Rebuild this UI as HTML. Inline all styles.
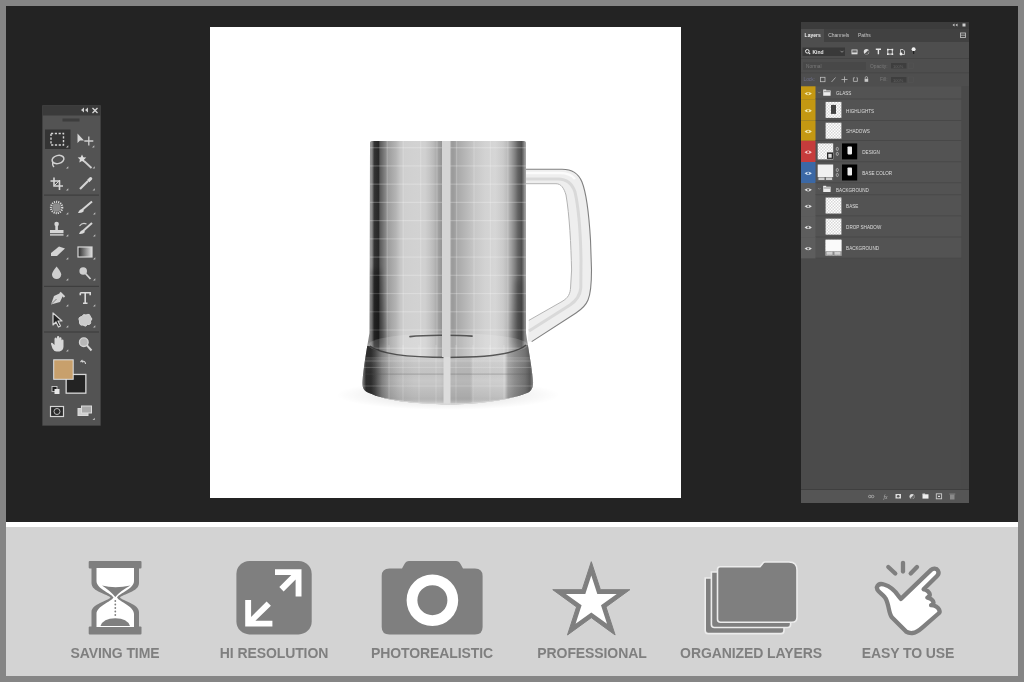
<!DOCTYPE html>
<html><head><meta charset="utf-8">
<style>
*{margin:0;padding:0;box-sizing:border-box}
html,body{width:1024px;height:682px;overflow:hidden;background:#858585;font-family:"Liberation Sans",sans-serif}
.a{position:absolute}
#dark{left:6px;top:6px;width:1012px;height:516px;background:#232323}
#white{left:6px;top:522px;width:1012px;height:5px;background:#fff}
#band{left:6px;top:527px;width:1012px;height:149px;background:#d3d3d3}
#canvas{left:210px;top:27px;width:471px;height:471px;background:#fff}
.lbl{will-change:transform;position:absolute;top:646px;font-size:14px;line-height:14px;font-weight:bold;color:#7f7f7f;letter-spacing:-0.1px;white-space:nowrap;transform:translateX(-50%)}
</style></head><body>
<div id="dark" class="a"></div>
<div id="white" class="a"></div>
<div id="band" class="a"></div>
<div id="canvas" class="a"></div>

<!--MUG-->
<svg class="a" style="left:210px;top:27px" width="471" height="471" viewBox="210 27 471 471">
<defs>
<linearGradient id="gb" x1="360" y1="0" x2="536" y2="0" gradientUnits="userSpaceOnUse">
<stop offset="0.0114" stop-color="#9a9a9a"/>
<stop offset="0.0568" stop-color="#9a9a9a"/>
<stop offset="0.0682" stop-color="#8a8a8a"/>
<stop offset="0.0756" stop-color="#555555"/>
<stop offset="0.0824" stop-color="#333333"/>
<stop offset="0.0909" stop-color="#2e2e2e"/>
<stop offset="0.1051" stop-color="#282828"/>
<stop offset="0.1136" stop-color="#5a5a5a"/>
<stop offset="0.1250" stop-color="#6a6a6a"/>
<stop offset="0.1364" stop-color="#7a7a7a"/>
<stop offset="0.1477" stop-color="#8a8a8a"/>
<stop offset="0.1591" stop-color="#9c9c9c"/>
<stop offset="0.1818" stop-color="#a8a8a8"/>
<stop offset="0.2045" stop-color="#b4b4b4"/>
<stop offset="0.2273" stop-color="#c6c6c6"/>
<stop offset="0.2557" stop-color="#d0d0d0"/>
<stop offset="0.3295" stop-color="#d2d2d2"/>
<stop offset="0.3693" stop-color="#d0d0d0"/>
<stop offset="0.3977" stop-color="#c4c4c4"/>
<stop offset="0.4205" stop-color="#b8b8b8"/>
<stop offset="0.4432" stop-color="#a2a2a2"/>
<stop offset="0.4631" stop-color="#959595"/>
<stop offset="0.5142" stop-color="#a0a0a0"/>
<stop offset="0.5284" stop-color="#9a9a9a"/>
<stop offset="0.5511" stop-color="#a8a8a8"/>
<stop offset="0.5966" stop-color="#b6b6b6"/>
<stop offset="0.6534" stop-color="#c8c8c8"/>
<stop offset="0.7102" stop-color="#d2d2d2"/>
<stop offset="0.7670" stop-color="#d6d6d6"/>
<stop offset="0.8125" stop-color="#cacaca"/>
<stop offset="0.8352" stop-color="#bcbcbc"/>
<stop offset="0.8580" stop-color="#a2a2a2"/>
<stop offset="0.8807" stop-color="#808080"/>
<stop offset="0.8977" stop-color="#626262"/>
<stop offset="0.9176" stop-color="#505050"/>
<stop offset="0.9261" stop-color="#6a6a6a"/>
<stop offset="0.9347" stop-color="#909090"/>
<stop offset="0.9432" stop-color="#9a9a9a"/>
<stop offset="0.9886" stop-color="#9a9a9a"/>
</linearGradient>
<radialGradient id="shd" cx="0.5" cy="0.5" r="0.5"><stop offset="0" stop-color="#000" stop-opacity="0.14"/><stop offset="0.6" stop-color="#000" stop-opacity="0.06"/><stop offset="1" stop-color="#000" stop-opacity="0"/></radialGradient>
<linearGradient id="hg" x1="0" y1="0" x2="1" y2="0"><stop offset="0" stop-color="#e8e8e8"/><stop offset="0.5" stop-color="#f4f4f4"/><stop offset="1" stop-color="#d8d8d8"/></linearGradient>
<linearGradient id="gbase" x1="360" y1="0" x2="536" y2="0" gradientUnits="userSpaceOnUse">
<stop offset="0.0000" stop-color="#aaaaaa"/>
<stop offset="0.0097" stop-color="#9a9a9a"/>
<stop offset="0.0227" stop-color="#606060"/>
<stop offset="0.0341" stop-color="#2e2e2e"/>
<stop offset="0.0625" stop-color="#2c2c2c"/>
<stop offset="0.0852" stop-color="#464646"/>
<stop offset="0.1250" stop-color="#808080"/>
<stop offset="0.1705" stop-color="#a8a8a8"/>
<stop offset="0.2273" stop-color="#bdbdbd"/>
<stop offset="0.3125" stop-color="#c8c8c8"/>
<stop offset="0.4545" stop-color="#c8c8c8"/>
<stop offset="0.4773" stop-color="#c0c0c0"/>
<stop offset="0.5114" stop-color="#b8b8b8"/>
<stop offset="0.6250" stop-color="#b8b8b8"/>
<stop offset="0.6477" stop-color="#cccccc"/>
<stop offset="0.8239" stop-color="#d0d0d0"/>
<stop offset="0.8409" stop-color="#a4a4a4"/>
<stop offset="0.8807" stop-color="#8c8c8c"/>
<stop offset="0.9375" stop-color="#727272"/>
<stop offset="0.9659" stop-color="#585858"/>
<stop offset="0.9830" stop-color="#888888"/>
<stop offset="0.9915" stop-color="#a0a0a0"/>
<stop offset="1.0000" stop-color="#aaaaaa"/>
</linearGradient>
<linearGradient id="dk" x1="0" y1="280" x2="0" y2="346" gradientUnits="userSpaceOnUse"><stop offset="0" stop-color="#000" stop-opacity="0"/><stop offset="1" stop-color="#000" stop-opacity="0.35"/></linearGradient>
<linearGradient id="bv" x1="0" y1="357" x2="0" y2="404" gradientUnits="userSpaceOnUse"><stop offset="0" stop-color="#fff" stop-opacity="0.12"/><stop offset="0.5" stop-color="#000" stop-opacity="0"/><stop offset="0.85" stop-color="#000" stop-opacity="0.08"/><stop offset="1" stop-color="#fff" stop-opacity="0.3"/></linearGradient>
<filter id="bl3" x="-100%" y="-50%" width="300%" height="200%"><feGaussianBlur stdDeviation="3"/></filter>
<clipPath id="bodyclip"><path d="M370 142.5 Q370 140.9 371.8 140.9 L524.2 140.9 Q525.9 140.9 525.9 142.5 L526 333 C528.5 350 532 368 533 381 C533.5 388 531 391.5 527 393 C510 400 480 404.2 448 404.2 C414 404.2 386 400.5 369 393 C364 391 362 388 362.5 381 C363.5 368 366.5 350 369.5 333 Z"/></clipPath>
</defs>
<ellipse cx="448" cy="395" rx="112" ry="15" fill="url(#shd)"/>
<path d="M526 169.2 L562 169.2 C570 169.2 578 172 582 182 C586 192 589 215 590.5 240 L591.5 270 C591.5 285 591 293 588 300 C586 305 582 309 576 313 L531.7 341.6 L528 341.6 L528.8 320.4 L562 301.5 C568 298 570.4 294 570.6 287 L571.6 270 C571 245 569.5 215 566 195 C564 188 561 183.7 556 183.7 L526 183.7 Z" fill="#eeeeee"/>
<path d="M526 173 L560 173 C567 173 572 175 575 179" fill="none" stroke="#fbfbfb" stroke-width="2.5"/>
<path d="M526 179 L558 179 C566 179 572 183 575 192 C578 205 580.5 230 581 260 L580.8 288 C580 296 576 301 570 305 L529 331" fill="none" stroke="#d9d9d9" stroke-width="3"/>
<path d="M526 169.2 L562 169.2 C570 169.2 578 172 582 182 C586 192 589 215 590.5 240 L591.5 270 C591.5 285 591 293 588 300 C586 305 582 309 576 313 L531.7 341.6" fill="none" stroke="#808080" stroke-width="1.1"/>
<path d="M528.8 320.4 L562 301.5 C568 298 570.4 294 570.6 287 L571.6 270 C571 245 569.5 215 566 195 C564 188 561 183.7 556 183.7 L526 183.7" fill="none" stroke="#b4b4b4" stroke-width="1"/>
<g clip-path="url(#bodyclip)">
<rect x="355" y="135" width="185" height="275" fill="url(#gb)"/>
<rect x="386.59999999999997" y="141" width="1.2" height="265" fill="#fff" fill-opacity="0.2"/><rect x="402.59999999999997" y="141" width="1.2" height="265" fill="#fff" fill-opacity="0.2"/><rect x="420.09999999999997" y="141" width="1.2" height="265" fill="#fff" fill-opacity="0.2"/><rect x="436.4" y="141" width="1.2" height="265" fill="#fff" fill-opacity="0.2"/><rect x="456.0" y="141" width="1.2" height="265" fill="#fff" fill-opacity="0.2"/><rect x="473.4" y="141" width="1.2" height="265" fill="#fff" fill-opacity="0.2"/><rect x="489.79999999999995" y="141" width="1.2" height="265" fill="#fff" fill-opacity="0.2"/><rect x="507.29999999999995" y="141" width="1.2" height="265" fill="#fff" fill-opacity="0.2"/><rect x="360" y="147.1" width="176" height="1.2" fill="#fff" fill-opacity="0.24"/><rect x="360" y="165.32999999999998" width="176" height="1.2" fill="#fff" fill-opacity="0.24"/><rect x="360" y="183.56" width="176" height="1.2" fill="#fff" fill-opacity="0.24"/><rect x="360" y="201.79" width="176" height="1.2" fill="#fff" fill-opacity="0.24"/><rect x="360" y="220.02" width="176" height="1.2" fill="#fff" fill-opacity="0.24"/><rect x="360" y="238.25" width="176" height="1.2" fill="#fff" fill-opacity="0.24"/><rect x="360" y="256.47999999999996" width="176" height="1.2" fill="#fff" fill-opacity="0.24"/><rect x="360" y="274.71" width="176" height="1.2" fill="#fff" fill-opacity="0.24"/><rect x="360" y="292.93999999999994" width="176" height="1.2" fill="#fff" fill-opacity="0.24"/><rect x="360" y="311.16999999999996" width="176" height="1.2" fill="#fff" fill-opacity="0.24"/><rect x="360" y="329.4" width="176" height="1.2" fill="#fff" fill-opacity="0.24"/><rect x="360" y="347.63" width="176" height="1.2" fill="#fff" fill-opacity="0.24"/><rect x="360" y="365.85999999999996" width="176" height="1.2" fill="#fff" fill-opacity="0.24"/><rect x="360" y="384.09" width="176" height="1.2" fill="#fff" fill-opacity="0.24"/>
<path d="M355 346 L370 346 C380 354 410 357.4 448 357.4 C486 357.4 516 354 526 345 L540 345 L540 410 L355 410Z" fill="url(#gbase)"/>
<rect x="360" y="357" width="176" height="50" fill="url(#bv)"/>
<rect x="360" y="360.5" width="176" height="1" fill="#fff" fill-opacity="0.2"/><rect x="360" y="366.9" width="176" height="1" fill="#fff" fill-opacity="0.2"/><rect x="360" y="385.5" width="176" height="1" fill="#fff" fill-opacity="0.2"/><rect x="388.5" y="345" width="1" height="65" fill="#fff" fill-opacity="0.2"/><rect x="402.5" y="345" width="1" height="65" fill="#fff" fill-opacity="0.2"/><rect x="418.5" y="345" width="1" height="65" fill="#fff" fill-opacity="0.2"/><rect x="435.5" y="345" width="1" height="65" fill="#fff" fill-opacity="0.2"/><rect x="455.5" y="345" width="1" height="65" fill="#fff" fill-opacity="0.2"/><rect x="472.5" y="345" width="1" height="65" fill="#fff" fill-opacity="0.2"/><rect x="489.5" y="345" width="1" height="65" fill="#fff" fill-opacity="0.2"/><rect x="503.5" y="345" width="1" height="65" fill="#fff" fill-opacity="0.2"/>
<path d="M372 270 L380 270 L385 346 L370 346Z" fill="#000" fill-opacity="0.35" filter="url(#bl3)"/>
<path d="M515 280 L522 280 L526 345 L510 345Z" fill="#000" fill-opacity="0.2" filter="url(#bl3)"/>
<ellipse cx="448" cy="345" rx="80" ry="12" fill="#fff" fill-opacity="0.16"/>
<path d="M370 346 C380 354 410 357.4 448 357.4 C486 357.4 516 354 526 345" fill="none" stroke="#2e2e2e" stroke-opacity="0.75" stroke-width="1.5"/>
<path d="M410 336.6 C424 335 456 334.8 472 336.2" fill="none" stroke="#3a3a3a" stroke-opacity="0.8" stroke-width="1.7" stroke-linecap="round"/>
<path d="M362 374.2 C390 374 506 374 534 374.2" fill="none" stroke="#555" stroke-opacity="0.25" stroke-width="1.2"/>
<rect x="442" y="135" width="8.5" height="222" fill="#d4d4d4"/><rect x="443.5" y="357" width="7" height="50" fill="#dcdcdc"/>
<path d="M362 393 C386 401 414 404.2 448 404.2 C480 404.2 510 400 534 393" fill="none" stroke="#d8d8d8" stroke-width="1.5"/>
</g>
</svg>
<!--/MUG-->

<!-- TOOLBAR -->
<svg class="a" style="left:42px;top:105px" width="59" height="321" viewBox="42 105 59 321">
<rect x="42" y="105" width="59" height="321" fill="#2e2e2e"/>
<rect x="42.5" y="105.5" width="58" height="320" fill="#535353"/>
<rect x="42.5" y="105.5" width="58" height="10" fill="#3a3a3a"/>
<rect x="62.5" y="118.5" width="17" height="3" fill="#3d3d3d"/>
<!-- collapse & close -->
<path d="M81 110 l3 -2.5 v5 z M85 110 l3 -2.5 v5 z" fill="#cfcfcf"/>
<path d="M92.5 108 l5 5 M97.5 108 l-5 5" stroke="#d8d8d8" stroke-width="1.3"/>
<g stroke="#d2d2d2" fill="none" stroke-width="1.3">
<!-- separators -->
</g>
<rect x="44" y="194.5" width="55" height="1.2" fill="#3e3e3e"/>
<rect x="44" y="285.8" width="55" height="1.2" fill="#3e3e3e"/>
<rect x="44" y="331.4" width="55" height="1.2" fill="#3e3e3e"/>
<!-- selected marquee bg -->
<rect x="45" y="129.5" width="25.5" height="19.5" fill="#343434"/>
<rect x="51" y="133.5" width="12.5" height="11.5" fill="none" stroke="#d4d4d4" stroke-width="1.4" stroke-dasharray="2.2 1.6"/>
<!-- move -->
<path d="M77.5 133.5 L77.5 143 L80 140.5 L84 140.5 Z" fill="#d6d6d6"/>
<path d="M88.8 136.5 v9 M84.3 141 h9" stroke="#d0d0d0" stroke-width="1.3"/>
<!-- lasso -->
<ellipse cx="58" cy="159.5" rx="6" ry="4" fill="none" stroke="#d2d2d2" stroke-width="1.5" transform="rotate(-15 58 159.5)"/>
<path d="M53 162 q-1 3 1 5" fill="none" stroke="#d2d2d2" stroke-width="1.4"/>
<!-- wand -->
<path d="M82 154.5 l1.3 2.7 3 .3 -2.2 2 .6 3 -2.7 -1.5 -2.7 1.5 .6 -3 -2.2 -2 3 -.3z" fill="#dcdcdc"/>
<path d="M84 161 L91.5 168" stroke="#d0d0d0" stroke-width="1.8"/>
<!-- crop -->
<path d="M54 177.5 V186 H63 M50.5 181 H59.5 V190" fill="none" stroke="#d6d6d6" stroke-width="1.6"/>
<path d="M54 186 L60 180" stroke="#d6d6d6" stroke-width="1"/>
<!-- eyedropper -->
<path d="M80 189 L88 181" stroke="#d4d4d4" stroke-width="2.2"/>
<path d="M87 180 l2.5 -2.5 a1.6 1.6 0 0 1 2.3 2.3 l-2.5 2.5z" fill="#d8d8d8"/>
<!-- spot heal -->
<circle cx="56.6" cy="207.5" r="5.6" fill="none" stroke="#dcdcdc" stroke-width="2.2" stroke-dasharray="1.1 1"/><circle cx="56.6" cy="207.5" r="4.2" fill="#8c8c8c"/>
<!-- brush -->
<path d="M92 201.5 L82 210" stroke="#d6d6d6" stroke-width="2"/>
<path d="M82.5 209 q-3 0 -4.5 4 q4 .5 6 -2z" fill="#dadada"/>
<!-- stamp -->
<circle cx="56.6" cy="224" r="2.3" fill="#d6d6d6"/>
<rect x="55.3" y="225" width="2.6" height="5" fill="#d6d6d6"/>
<rect x="50" y="230" width="13.5" height="3.2" fill="#d6d6d6"/>
<rect x="50" y="234.2" width="13.5" height="1.4" fill="#d6d6d6"/>
<!-- history brush -->
<path d="M92 223 L83 231" stroke="#d6d6d6" stroke-width="2"/>
<path d="M83.5 230 q-3 0 -4.5 4 q4 .5 6 -2z" fill="#dadada"/>
<path d="M79.5 226 q3 -4 7 -2" fill="none" stroke="#cfcfcf" stroke-width="1.2"/>
<!-- eraser -->
<path d="M51 253 L59 246.5 L65 248.5 L57 256 L51 256z" fill="#d4d4d4"/>
<!-- gradient -->
<defs><linearGradient id="tg" x1="0" x2="1"><stop offset="0" stop-color="#2a2a2a"/><stop offset="1" stop-color="#e0e0e0"/></linearGradient></defs>
<rect x="78" y="247" width="14" height="10" fill="url(#tg)" stroke="#d8d8d8" stroke-width="1.2"/>
<!-- drop -->
<path d="M56.6 266.5 Q52 272 52 274.5 a4.6 4.6 0 0 0 9.2 0 Q61.2 272 56.6 266.5z" fill="#cfcfcf"/>
<!-- dodge -->
<circle cx="83.2" cy="271" r="3.8" fill="#cfcfcf"/>
<path d="M85.5 273.5 L90.5 279" stroke="#d0d0d0" stroke-width="1.8"/>
<!-- pen -->
<path d="M51 304.5 L54 296 L60.5 293 L63 295.5 L60 302 Z" fill="#d4d4d4"/>
<path d="M60 292.5 L64.5 297" stroke="#d4d4d4" stroke-width="2"/>
<path d="M51.5 304 L56.5 299" stroke="#6a6a6a" stroke-width=".8"/>
<!-- T -->
<path d="M80.3 292.7 H90.2 V295.2 M80.3 292.7 V295.2 M85.2 292.7 V303 M83 303.2 H87.5" fill="none" stroke="#dadada" stroke-width="1.6"/>
<!-- path select -->
<path d="M53 313 L53 325 L56 322 L58.5 327 L60.5 326 L58 321 L62 321 Z" fill="#222" stroke="#d6d6d6" stroke-width="1.2" stroke-linejoin="round"/>
<!-- custom shape -->
<path d="M79.5 321 q-2 -4 2.5 -4.5 q1 -3 4 -1.5 q4 -2 4.5 2 q3 2 0 4 q1 4 -3 3.5 q-2 3 -4.5 0.5 q-4 1 -3.5 -4z" fill="#cacaca" stroke="#d6d6d6" stroke-width="1"/>
<!-- hand -->
<path d="M51 344 q0 -2 1.5 -1 l2 2 v-6 q0 -1.5 1.2 -1.5 q1.2 0 1.2 1.5 v-1.5 q0 -1.4 1.2 -1.4 q1.2 0 1.2 1.4 v1 q0 -1.2 1.1 -1.2 q1.1 0 1.1 1.2 v2 q0 -1 1 -1 q1 0 1 1 v6 q0 4 -4 5 h-3 q-2.5 0 -4 -3z" fill="#d8d8d8"/>
<!-- zoom -->
<circle cx="83.8" cy="342.2" r="4.3" fill="#b8b8b8" stroke="#d6d6d6" stroke-width="1.4"/>
<path d="M86.8 345.2 L91.5 350.5" stroke="#d6d6d6" stroke-width="2"/>
<!-- swatches -->
<path d="M82 361 a3 3 0 0 1 3.5 3 M80.5 362 l1.5 -1.5 1 2" fill="none" stroke="#d6d6d6" stroke-width="1.1"/>
<rect x="65.5" y="373.8" width="21" height="20" fill="#d8d8d8"/>
<rect x="66.8" y="375.1" width="18.4" height="17.4" fill="#232323"/>
<rect x="53.2" y="359.3" width="20.5" height="20.5" fill="#e4e4e4"/>
<rect x="54.2" y="360.3" width="18.5" height="18.5" fill="#c8a06c"/>
<rect x="52" y="386.5" width="5" height="5" fill="#1e1e1e" stroke="#d8d8d8" stroke-width=".8"/>
<rect x="54.5" y="389" width="5" height="5" fill="#e8e8e8"/>
<!-- quick mask -->
<rect x="50.5" y="406.5" width="13" height="10" fill="#2a2a2a" stroke="#d6d6d6" stroke-width="1.2"/>
<circle cx="57" cy="411.5" r="3" fill="none" stroke="#bbb" stroke-width="1"/>
<!-- screen mode -->
<rect x="78" y="408.5" width="10" height="7" fill="#cfcfcf" stroke="#dcdcdc" stroke-width="1"/>
<rect x="81.5" y="406" width="10" height="7" fill="#aaa" stroke="#dcdcdc" stroke-width="1"/>
<!-- tiny triangles -->
<g fill="#bdbdbd">
<path d="M66 147.5 h2.3 v-2.3z M92 147.5 h2.3 v-2.3z M66 168.5 h2.3 v-2.3z M92.5 168.5 h2.3 v-2.3z M66 190.5 h2.3 v-2.3z M92.5 190.5 h2.3 v-2.3z"/>
<path d="M66 214.5 h2.3 v-2.3z M93 214.5 h2.3 v-2.3z M66 236.5 h2.3 v-2.3z M93 236.5 h2.3 v-2.3z M66 259.5 h2.3 v-2.3z M93 259.5 h2.3 v-2.3z M66 280.5 h2.3 v-2.3z M93 280.5 h2.3 v-2.3z"/>
<path d="M66 306.5 h2.3 v-2.3z M93 306.5 h2.3 v-2.3z M66 327.5 h2.3 v-2.3z M93 327.5 h2.3 v-2.3z M66 351.5 h2.3 v-2.3z M92.5 420 h2.3 v-2.3z"/>
</g>
</svg>

<!-- LAYERS -->
<svg class="a" style="left:801px;top:22px;will-change:transform" width="168" height="481" viewBox="801 22 168 481">
<defs><pattern id="chk" x="0" y="0" width="3" height="3" patternUnits="userSpaceOnUse"><rect width="3" height="3" fill="#fff"/><rect width="1.5" height="1.5" fill="#d8d8d8"/><rect x="1.5" y="1.5" width="1.5" height="1.5" fill="#d8d8d8"/></pattern></defs>
<rect x="801" y="22" width="168" height="481" fill="#4b4b4b"/>
<rect x="801" y="22" width="168" height="7" fill="#3c3c3c"/>
<rect x="801" y="29" width="168" height="13" fill="#414141"/>
<rect x="801" y="29" width="23" height="13" fill="#4e4e4e"/>
<rect x="801" y="42" width="168" height="44.3" fill="#4e4e4e"/>
<path d="M952.5 25 l2 -1.6 v3.2z M955.5 25 l2 -1.6 v3.2z" fill="#ccc"/><rect x="962.5" y="23.5" width="3" height="3" fill="#ccc"/>
<rect x="960.5" y="33" width="5" height="4.5" fill="none" stroke="#bbb" stroke-width="0.9"/><path d="M960.5 35.2h5" stroke="#bbb" stroke-width=".8"/>
<text x="804.6" y="37.2" font-size="5" fill="#f0f0f0" font-weight="bold" font-family="Liberation Sans">Layers</text>
<text x="828.2" y="37.2" font-size="5" fill="#c8c8c8" font-weight="normal" font-family="Liberation Sans">Channels</text>
<text x="858" y="37.2" font-size="5" fill="#c8c8c8" font-weight="normal" font-family="Liberation Sans">Paths</text>
<rect x="802.5" y="47.5" width="42.5" height="8.5" fill="#393939"/>
<circle cx="807.3" cy="51.3" r="1.8" fill="none" stroke="#eee" stroke-width="1"/><path d="M808.6 52.6 l1.6 1.6" stroke="#eee" stroke-width="1.1"/>
<text x="812.5" y="53.8" font-size="5" fill="#e8e8e8" font-weight="bold" font-family="Liberation Sans">Kind</text>
<path d="M840.5 50.8 l1.5 1.5 1.5 -1.5" fill="none" stroke="#aaa" stroke-width=".7"/>
<rect x="851.5" y="49.5" width="6" height="4.8" fill="#ddd"/><rect x="852.3" y="50.3" width="4.4" height="2.2" fill="#666"/>
<circle cx="866.5" cy="51.8" r="2.7" fill="#e0e0e0"/><path d="M864.6 53.7 a2.7 2.7 0 0 0 3.8 -3.8z" fill="#555"/>
<path d="M875.8 49.3 h5.2 M878.4 49.3 v5" stroke="#e6e6e6" stroke-width="1.4"/>
<rect x="887.8" y="49.6" width="4.5" height="4.5" fill="none" stroke="#ddd" stroke-width=".9"/><rect x="887" y="48.8" width="1.6" height="1.6" fill="#eee"/><rect x="891.6" y="48.8" width="1.6" height="1.6" fill="#eee"/><rect x="887" y="53.4" width="1.6" height="1.6" fill="#eee"/><rect x="891.6" y="53.4" width="1.6" height="1.6" fill="#eee"/>
<path d="M900.5 54.5 v-5 h2.5 l1.5 1.5 v3.5z" fill="none" stroke="#ddd" stroke-width=".8"/><circle cx="901" cy="54" r="1.4" fill="#eee"/>
<circle cx="913.6" cy="49.3" r="2" fill="#f0f0f0"/><rect x="913" y="51" width="1.2" height="3" fill="#222"/>
<rect x="801" y="58" width="168" height=".8" fill="#444"/>
<rect x="803" y="62" width="63" height="8" fill="#484848"/>
<text x="806" y="68.0" font-size="4.8" fill="#7a7a7a" font-weight="normal" font-family="Liberation Sans">Normal</text>
<text x="870" y="68.0" font-size="4.8" fill="#7a7a7a" font-weight="normal" font-family="Liberation Sans">Opacity:</text>
<rect x="891" y="63" width="15.5" height="5.5" fill="#3e3e3e"/>
<text x="893" y="67.5" font-size="4" fill="#666" font-weight="normal" font-family="Liberation Sans">100%</text>
<rect x="908.5" y="63" width="5" height="5.5" fill="none" stroke="#555" stroke-width=".5"/>
<rect x="801" y="72.4" width="168" height=".8" fill="#444"/>
<text x="803.5" y="81.3" font-size="4.8" fill="#6d6f8a" font-weight="normal" font-family="Liberation Sans">Lock:</text>
<g stroke="#bdbdbd" fill="none" stroke-width=".8"><rect x="820.6" y="77.3" width="4.4" height="4.4"/><path d="M831.5 82 l4 -4.5"/><path d="M844.5 76.5v6 M841.5 79.5h6"/><path d="M853.4 77.8 v3.6 h4 M853.4 77.8h1.5 M857.4 81.4v-3.6h-1"/></g><rect x="864.6" y="78.8" width="3.6" height="3" fill="#c8c8c8"/><path d="M865.2 78.8 v-1 a1.2 1.2 0 0 1 2.4 0 v1" fill="none" stroke="#c8c8c8" stroke-width=".7"/>
<text x="880" y="81.3" font-size="4.8" fill="#7a7a7a" font-weight="normal" font-family="Liberation Sans">Fill:</text>
<rect x="891" y="77" width="15.5" height="5.5" fill="#3e3e3e"/>
<text x="893" y="81.5" font-size="4" fill="#666" font-weight="normal" font-family="Liberation Sans">100%</text>
<rect x="908.5" y="77" width="5" height="5.5" fill="none" stroke="#555" stroke-width=".5"/>
<rect x="801" y="86.3" width="160.5" height="172" fill="#535353"/>
<rect x="961.5" y="86.3" width="7.5" height="403" fill="#4a4a4a"/>
<rect x="801" y="86.3" width="14.5" height="12.900000000000006" fill="#c49812"/>
<rect x="815.5" y="98.60000000000001" width="146" height=".8" fill="#474747"/>
<path d="M804.5 93.55 q3.7 -3.3 7.4 0 q-3.7 3.3 -7.4 0z" fill="#f2e9b0"/><circle cx="808.2" cy="93.55" r="1.1" fill="#c49812"/>
<path d="M818 91.75 l1.3 1.3 1.3 -1.3" fill="none" stroke="#999" stroke-width=".6"/>
<rect x="823.2" y="90.45" width="7.4" height="5.3" fill="#ececec"/><rect x="823.2" y="89.55" width="3" height="1.2" fill="#ececec"/><rect x="823.8" y="91.35" width="6.2" height=".8" fill="#777"/>
<text x="836" y="95.45" font-size="4.6" fill="#dedede" font-weight="normal" font-family="Liberation Sans">GLASS</text>
<rect x="801" y="99.2" width="14.5" height="21.39999999999999" fill="#c49812"/>
<rect x="815.5" y="120.0" width="146" height=".8" fill="#474747"/>
<path d="M804.5 110.7 q3.7 -3.3 7.4 0 q-3.7 3.3 -7.4 0z" fill="#f2e9b0"/><circle cx="808.2" cy="110.7" r="1.1" fill="#c49812"/>
<rect x="825.6" y="101.9" width="15.8" height="16" fill="url(#chk)"/>
<rect x="831" y="104.9" width="5" height="9" fill="#444"/>
<text x="846.1" y="112.60000000000001" font-size="4.6" fill="#dedede" font-weight="normal" font-family="Liberation Sans">HIGHLIGHTS</text>
<rect x="801" y="120.6" width="14.5" height="20.200000000000017" fill="#c49812"/>
<rect x="815.5" y="140.20000000000002" width="146" height=".8" fill="#474747"/>
<path d="M804.5 131.5 q3.7 -3.3 7.4 0 q-3.7 3.3 -7.4 0z" fill="#f2e9b0"/><circle cx="808.2" cy="131.5" r="1.1" fill="#c49812"/>
<rect x="825.6" y="122.69999999999999" width="15.8" height="16" fill="url(#chk)"/>
<text x="846.1" y="133.39999999999998" font-size="4.6" fill="#dedede" font-weight="normal" font-family="Liberation Sans">SHADOWS</text>
<rect x="801" y="140.8" width="14.5" height="21.19999999999999" fill="#c63c3c"/>
<rect x="815.5" y="161.4" width="146" height=".8" fill="#474747"/>
<path d="M804.5 152.20000000000002 q3.7 -3.3 7.4 0 q-3.7 3.3 -7.4 0z" fill="#f3c7c7"/><circle cx="808.2" cy="152.20000000000002" r="1.1" fill="#c63c3c"/>
<rect x="817.7" y="143.4" width="15.5" height="16" fill="url(#chk)"/><rect x="827" y="152.4" width="6" height="6.5" fill="#2a2a2a"/><rect x="828.3" y="153.9" width="3.4" height="3.8" fill="#ddd"/>
<rect x="836.3" y="147.4" width="2" height="3" rx="1" fill="none" stroke="#ccc" stroke-width=".7"/><rect x="836.3" y="152.4" width="2" height="3" rx="1" fill="none" stroke="#ccc" stroke-width=".7"/>
<rect x="842" y="143.4" width="15.2" height="16" fill="#000"/><rect x="847.5" y="146.4" width="4.5" height="8" rx=".8" fill="#eee"/>
<text x="862.3" y="154.1" font-size="4.6" fill="#dedede" font-weight="normal" font-family="Liberation Sans">DESIGN</text>
<rect x="801" y="162" width="14.5" height="21" fill="#3b68a5"/>
<rect x="815.5" y="182.4" width="146" height=".8" fill="#474747"/>
<path d="M804.5 173.3 q3.7 -3.3 7.4 0 q-3.7 3.3 -7.4 0z" fill="#d7e6f6"/><circle cx="808.2" cy="173.3" r="1.1" fill="#3b68a5"/>
<rect x="817.7" y="164.5" width="15.5" height="12.5" fill="#f0f0f0"/><rect x="817.7" y="177.0" width="15.5" height="3.5" fill="#6a6a6a"/><rect x="818.5" y="177.5" width="6" height="2.5" fill="#d0d0d0"/><rect x="826" y="177.5" width="6" height="2.5" fill="#d0d0d0"/>
<rect x="836.3" y="168.5" width="2" height="3" rx="1" fill="none" stroke="#ccc" stroke-width=".7"/><rect x="836.3" y="173.5" width="2" height="3" rx="1" fill="none" stroke="#ccc" stroke-width=".7"/>
<rect x="842" y="164.5" width="15.2" height="16" fill="#000"/><rect x="847.5" y="167.5" width="4.5" height="8" rx=".8" fill="#eee"/>
<text x="862.3" y="175.2" font-size="4.6" fill="#dedede" font-weight="normal" font-family="Liberation Sans">BASE COLOR</text>
<rect x="801" y="183" width="14.5" height="12" fill="#5d5d5d"/>
<rect x="815.5" y="194.4" width="146" height=".8" fill="#474747"/>
<path d="M804.5 189.8 q3.7 -3.3 7.4 0 q-3.7 3.3 -7.4 0z" fill="#e2e2e2"/><circle cx="808.2" cy="189.8" r="1.1" fill="#5d5d5d"/>
<path d="M818 188.0 l1.3 1.3 1.3 -1.3" fill="none" stroke="#999" stroke-width=".6"/>
<rect x="823.2" y="186.7" width="7.4" height="5.3" fill="#ececec"/><rect x="823.2" y="185.8" width="3" height="1.2" fill="#ececec"/><rect x="823.8" y="187.6" width="6.2" height=".8" fill="#777"/>
<text x="836" y="191.7" font-size="4.6" fill="#dedede" font-weight="normal" font-family="Liberation Sans">BACKGROUND</text>
<rect x="801" y="195" width="14.5" height="21.099999999999994" fill="#5d5d5d"/>
<rect x="815.5" y="215.5" width="146" height=".8" fill="#474747"/>
<path d="M804.5 206.35000000000002 q3.7 -3.3 7.4 0 q-3.7 3.3 -7.4 0z" fill="#e2e2e2"/><circle cx="808.2" cy="206.35000000000002" r="1.1" fill="#5d5d5d"/>
<rect x="825.6" y="197.55" width="15.8" height="16" fill="url(#chk)"/>
<text x="846.1" y="208.25" font-size="4.6" fill="#dedede" font-weight="normal" font-family="Liberation Sans">BASE</text>
<rect x="801" y="216.1" width="14.5" height="21.099999999999994" fill="#5d5d5d"/>
<rect x="815.5" y="236.6" width="146" height=".8" fill="#474747"/>
<path d="M804.5 227.45 q3.7 -3.3 7.4 0 q-3.7 3.3 -7.4 0z" fill="#e2e2e2"/><circle cx="808.2" cy="227.45" r="1.1" fill="#5d5d5d"/>
<rect x="825.6" y="218.64999999999998" width="15.8" height="16" fill="url(#chk)"/>
<text x="846.1" y="229.34999999999997" font-size="4.6" fill="#dedede" font-weight="normal" font-family="Liberation Sans">DROP SHADOW</text>
<rect x="801" y="237.2" width="14.5" height="21.100000000000023" fill="#5d5d5d"/>
<rect x="815.5" y="257.7" width="146" height=".8" fill="#474747"/>
<path d="M804.5 248.55 q3.7 -3.3 7.4 0 q-3.7 3.3 -7.4 0z" fill="#e2e2e2"/><circle cx="808.2" cy="248.55" r="1.1" fill="#5d5d5d"/>
<rect x="825.6" y="239.75" width="15.8" height="16" fill="url(#chk)"/>
<rect x="825.6" y="239.75" width="15.8" height="11.5" fill="#fafafa"/><rect x="825.6" y="251.25" width="15.8" height="4.5" fill="#8a8a8a"/><rect x="826.5" y="251.75" width="6" height="3" fill="#cfcfcf"/><rect x="834.5" y="251.75" width="6" height="3" fill="#cfcfcf"/>
<text x="846.1" y="250.45" font-size="4.6" fill="#dedede" font-weight="normal" font-family="Liberation Sans">BACKGROUND</text>
<rect x="801" y="489.2" width="168" height=".8" fill="#3d3d3d"/>
<rect x="801" y="490" width="168" height="13" fill="#555"/>
<g fill="none" stroke="#b0b0b0" stroke-width=".8"><rect x="868.5" y="495.3" width="2.6" height="2.4" rx="1.2"/><rect x="871.3" y="495.3" width="2.6" height="2.4" rx="1.2"/></g>
<text x="883.5" y="498.5" font-size="5.5" fill="#b8b8b8" font-style="italic" font-family="Liberation Serif">fx</text>
<rect x="895.5" y="494" width="5.5" height="4.5" fill="#ddd"/><circle cx="898.2" cy="496.2" r="1.3" fill="#555"/>
<circle cx="912" cy="496.5" r="2.5" fill="#ddd"/><path d="M910.2 498.3 a2.5 2.5 0 0 0 3.6 -3.6z" fill="#666"/>
<rect x="922.5" y="494.3" width="6" height="4.3" fill="#eee"/><rect x="922.5" y="493.6" width="2.6" height="1" fill="#eee"/>
<rect x="936.3" y="493.8" width="5.3" height="5" fill="none" stroke="#ccc" stroke-width=".9"/><rect x="938" y="495.8" width="2" height="1.2" fill="#ddd"/>
<rect x="950" y="494.5" width="4.5" height="5" fill="#8a8a8a"/><rect x="949.3" y="493.6" width="6" height=".8" fill="#8a8a8a"/>
</svg>

<svg class="a" style="left:0;top:527px" width="1024" height="155" viewBox="0 527 1024 155">
<!-- hourglass -->
<rect x="88.7" y="561" width="52.8" height="7.5" rx="1" fill="#7f7f7f"/>
<rect x="88.7" y="626.5" width="52.8" height="8" rx="1" fill="#7f7f7f"/>
<path d="M91.5 568 L91.5 583 C91.5 592 108 594 110.5 597.5 C108 601 91.5 604 91.5 612 L91.5 627 L139 627 L139 612 C139 604 122.5 601 120 597.5 C122.5 594 139 592 139 583 L139 568Z" fill="#7f7f7f"/>
<path d="M96.5 568 L96.5 581 C96.5 589 111 593 113.5 597.5 C111 602 96.5 606 96.5 614 L96.5 627 L134 627 L134 614 C134 606 119.5 602 117 597.5 C119.5 593 134 589 134 581 L134 568Z" fill="#fff"/>
<path d="M102 585.5 Q115 589 130.5 585.5 Q120 591 115.3 597 Q110.5 591 102 585.5Z" fill="#7f7f7f"/>
<path d="M100.5 626 Q103 618.5 115.3 618.3 Q127.5 618.5 130 626Z" fill="#7f7f7f"/>
<g fill="#7f7f7f"><circle cx="115.3" cy="601" r=".9"/><circle cx="115.3" cy="604.5" r=".9"/><circle cx="115.3" cy="608" r=".9"/><circle cx="115.3" cy="611.5" r=".9"/><circle cx="115.3" cy="615" r=".9"/></g>
<!-- hi res -->
<rect x="236.4" y="561" width="75.3" height="73.4" rx="13" fill="#7f7f7f"/>
<g fill="#fff">
<path d="M275 569.3 H301.5 V596.6 H295.6 V579.4 L283.6 591.4 L279.3 587.1 L291.3 575.1 H275Z"/>
<path d="M245.2 600 H251.1 V616.9 L266.6 601.4 L270.9 605.7 L255.4 620.7 H272.4 V626.5 H245.2Z"/>
</g>
<!-- camera -->
<path d="M409 561 H456 Q459 561 460.5 564 L463 568.5 H475 Q482.6 568.5 482.6 576 V627 Q482.6 634.5 475 634.5 H389.5 Q381.7 634.5 381.7 627 V576 Q381.7 568.5 389.5 568.5 H402 L404.5 564 Q406 561 409 561Z" fill="#7f7f7f"/>
<circle cx="432.4" cy="600.2" r="20.4" fill="none" stroke="#fff" stroke-width="10.8"/>
<!-- star -->
<path d="M591.30 561.70 L600.39 589.68 L629.82 589.68 L606.01 606.98 L615.11 634.97 L591.30 617.67 L567.49 634.97 L576.59 606.98 L552.78 589.68 L582.21 589.68Z" fill="#7f7f7f" stroke="#7f7f7f" stroke-width="1" stroke-linejoin="round"/>
<path d="M591.30 575.47 L597.30 593.94 L616.72 593.94 L601.01 605.36 L607.01 623.83 L591.30 612.41 L575.59 623.83 L581.59 605.36 L565.88 593.94 L585.30 593.94Z" fill="#fff"/>
<!-- folders -->
<g stroke="#ececec" stroke-width="1.6" fill="#7f7f7f">
<path d="M705.2 578 H781 Q784 578 784 581 V630.5 Q784 633.6 781 633.6 H708.2 Q705.2 633.6 705.2 630.5Z"/>
<path d="M711.4 572 H787.6 Q790.6 572 790.6 575 V624.5 Q790.6 627.5 787.6 627.5 H714.4 Q711.4 627.5 711.4 624.5Z"/>
<path d="M720 566.7 H760 L763.5 562.5 Q764 562 765 562 H789 Q797 562 797 570 V617.2 Q797 622.2 792 622.2 H720.5 Q717.5 622.2 717.5 619.2 V569.7 Q717.5 566.7 720 566.7Z"/>
</g>
<!-- hand -->
<path d="M876.8 587.4 C878 584 881 583.5 884 584.5 C889 586 894 589 898.6 596.1 L900.9 598.9 L931.1 569.9 C933 568 936.5 568 937.9 570.5 C939 572.5 938.5 574.5 937 576 L923.6 589.3 C926.5 589.5 929.5 592 929.8 594.5 C930 596 928.5 597 927.3 597.6 C930.5 598 933.2 600.5 933.5 602.5 C933.5 604 932 605 931.1 605.2 C934.5 605.5 938 607.5 939.2 609.8 C940 611.5 939.5 612.8 938.5 613.5 L922.3 627.6 C919 630.5 915.5 632.8 912.4 633 C909.5 633.2 907.5 632.5 906.1 631.6 L891.8 617.3 C889.5 614 889 609 888.1 605.5 C887 601 886 598.5 884.9 597.4 C882 594 878.5 592 877.5 589.9Z" fill="#fff" stroke="#7f7f7f" stroke-width="4.3" stroke-linejoin="round"/>
<g stroke="#7f7f7f" stroke-width="4.3" stroke-linecap="round">
<path d="M888.3 567 L895.3 573.5"/><path d="M903 562.8 V571.6"/><path d="M917 567 L910.7 573.5"/>
</g>
</svg>
<!-- BOTTOM LABELS -->
<div class="lbl" style="left:115px">SAVING TIME</div>
<div class="lbl" style="left:273.6px">HI RESOLUTION</div>
<div class="lbl" style="left:432.4px">PHOTOREALISTIC</div>
<div class="lbl" style="left:591.5px">PROFESSIONAL</div>
<div class="lbl" style="left:750.5px">ORGANIZED LAYERS</div>
<div class="lbl" style="left:907.6px">EASY TO USE</div>
</body></html>
